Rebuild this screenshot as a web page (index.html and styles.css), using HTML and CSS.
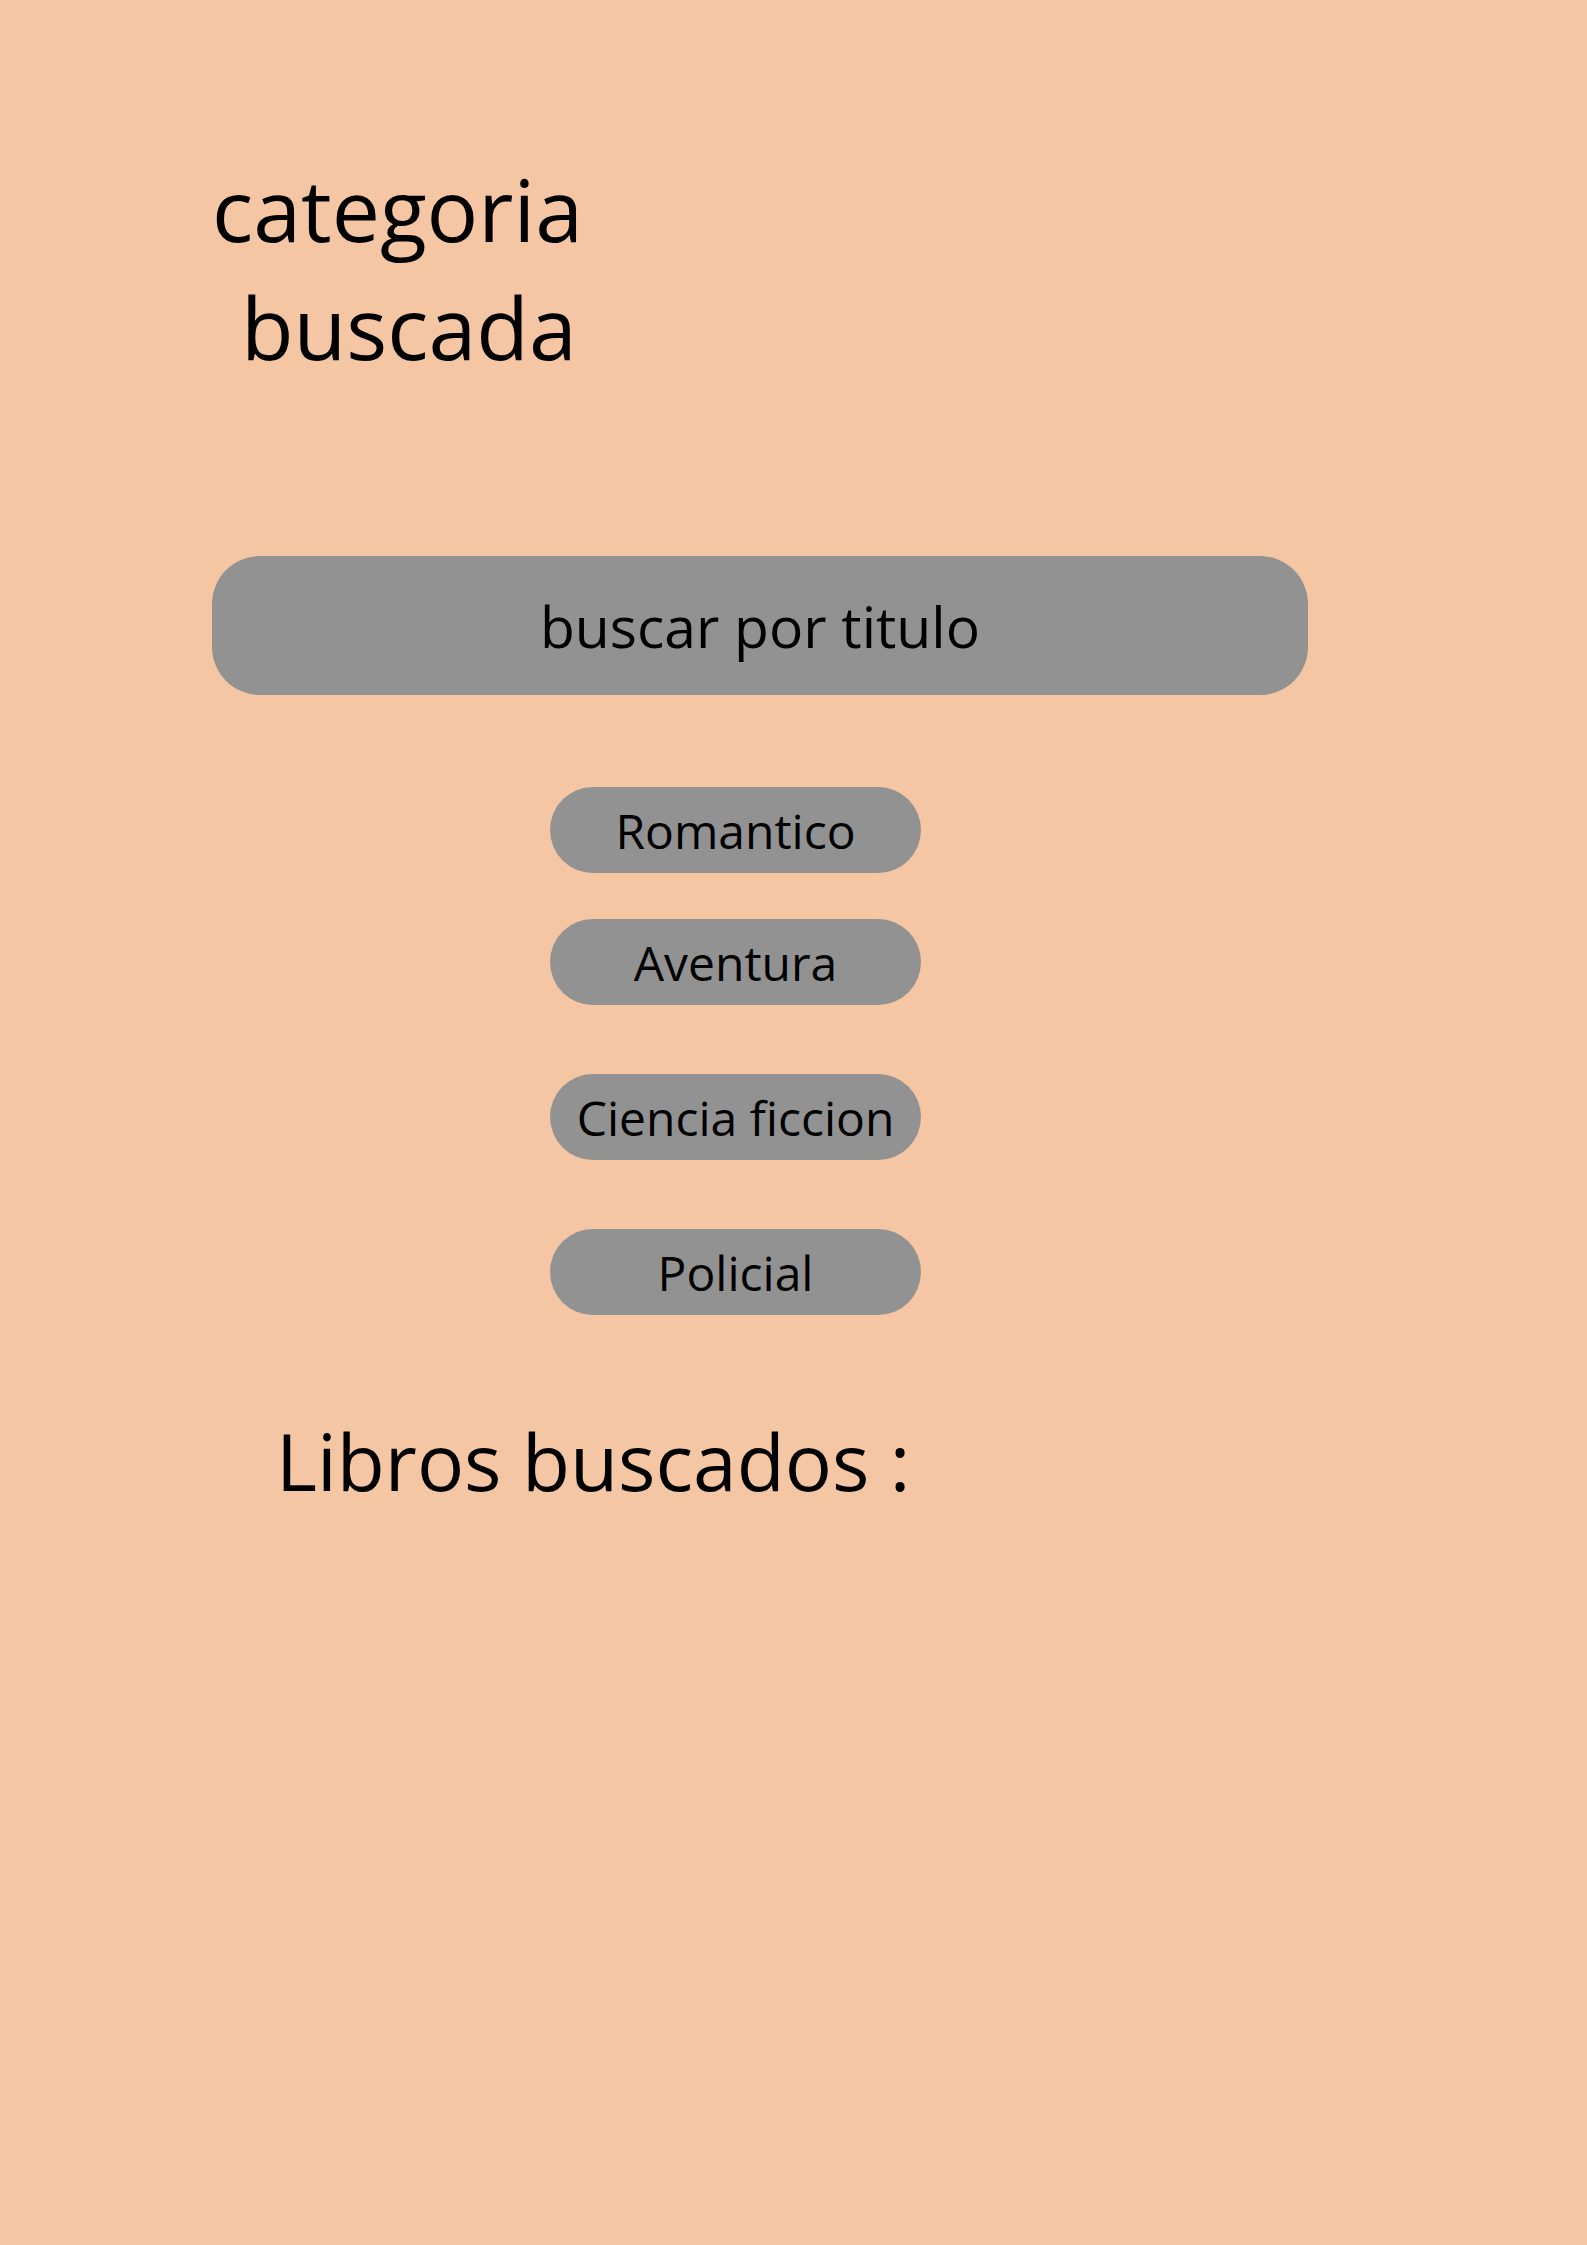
FILE: index.html
```html
<!DOCTYPE html>
<html lang="es">
<head>
<meta charset="utf-8">
<title>categoria buscada</title>
<link rel="stylesheet" href="styles.css">
</head>
<body>
<main class="page">
  <h1 class="title">
    <span class="title-line">categoria</span>
    <span class="title-line title-line--indent">buscada</span>
  </h1>
  <div class="search">buscar por titulo</div>
  <nav class="categories">
    <button class="cat cat--first">Romantico</button>
    <button class="cat cat--second">Aventura</button>
    <button class="cat">Ciencia ficcion</button>
    <button class="cat">Policial</button>
  </nav>
  <h2 class="results">Libros buscados :</h2>
</main>
</body>
</html>
```

FILE: styles.css
```css
html, body {
  margin: 0;
  padding: 0;
}
body {
  background: #f4c6a4;
  font-family: "Open Sans", "Noto Sans", sans-serif;
  color: #000;
  min-height: 2245px;
}
.page {
  padding-left: 212px;
  padding-top: 150px;
  display: flex;
  flex-direction: column;
  align-items: flex-start;
}
.title {
  margin: 0;
  font-size: 86px;
  font-weight: 400;
  line-height: 118px;
}
.title-line {
  display: block;
}
.title-line--indent {
  padding-left: 29px;
}
.search {
  margin-top: 170px;
  width: 1096px;
  height: 139px;
  border-radius: 48px;
  background: #929292;
  display: flex;
  align-items: center;
  justify-content: center;
  font-size: 57px;
}
.categories {
  margin-top: 92px;
  margin-left: 338px;
  display: flex;
  flex-direction: column;
  gap: 69px;
}
.cat {
  width: 371px;
  height: 86px;
  border: none;
  border-radius: 43px;
  background: #929292;
  font-family: "Open Sans", "Noto Sans", sans-serif;
  font-size: 48px;
  color: #000;
  padding: 0;
  display: flex;
  align-items: center;
  justify-content: center;
}
.cat--first {
  margin-bottom: -23px;
}
.results {
  margin: 92px 0 0 64px;
  font-size: 78.5px;
  font-weight: 400;
  line-height: normal;
}
```
